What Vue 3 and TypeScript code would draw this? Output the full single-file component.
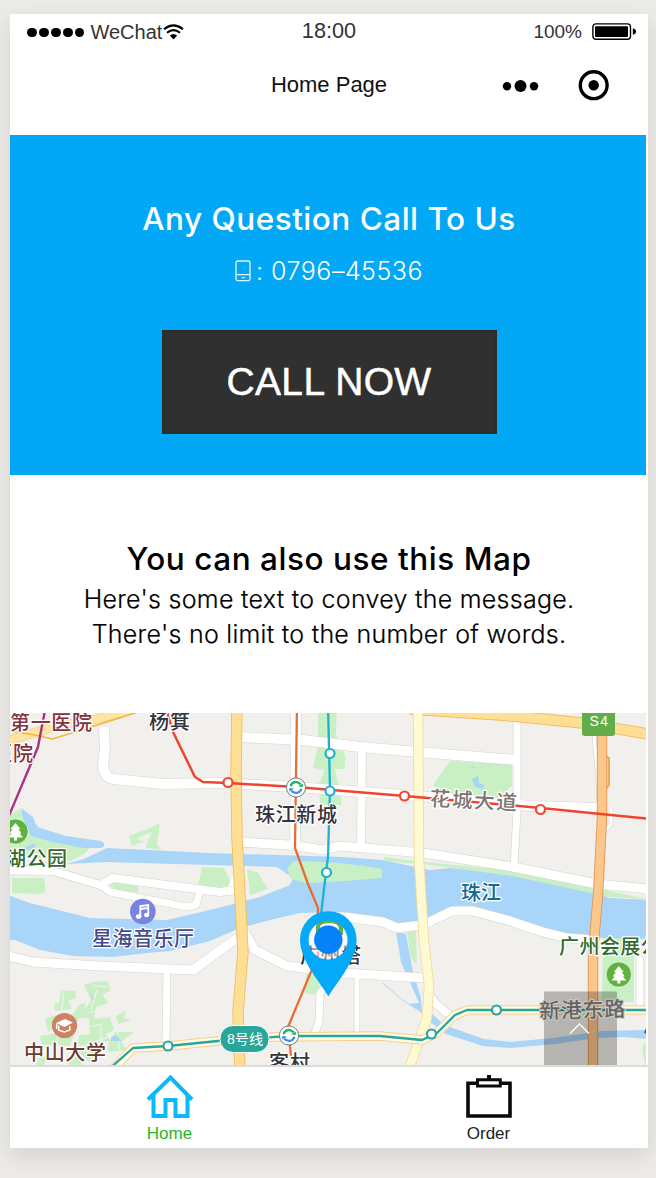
<script setup lang="ts">
interface Line {
  d: string
  w: number
}
interface Highway extends Line {
  fill: string
  edge: string
}
interface Stop {
  x: number
  y: number
  color: string
}
interface Label {
  text: string
  x: number
  y: number
  w: number
  size: number
  color: string
  rotate?: number
}

const signal = [1, 2, 3, 4, 5]

const streets: Line[] = [
  { d: 'M104 727 L105 748 L103 765 Q104 777 113 779 L163 784 L220 783 L296 787 L430 797 L530 806 L597 808', w: 10 },
  { d: 'M0 870 L53 871 L100 885 L113 878 L220 892 L244 889', w: 8 },
  { d: 'M100 884 L110 892 L187 907 L196 905 L200 891', w: 7 },
  { d: 'M0 954 L33 962 L100 966 L193 970 L237 938', w: 9 },
  { d: 'M245 933 L255 950 L287 966 L343 973 L424 978', w: 9 },
  { d: 'M167 968 L166 1043', w: 7 },
  { d: 'M296 705 L295 850', w: 10 },
  { d: 'M238 737 L303 740 L360 747 L430 753 L516 760', w: 10 },
  { d: 'M362 748 L361 848', w: 8 },
  { d: 'M238 842 L290 845 L323 850 L340 846 L423 853 L513 867 L597 884 L660 890', w: 9 },
  { d: 'M517 718 L517 810 L514 867', w: 7 },
  { d: 'M594 735 L599 792 L597 808', w: 3 },
  { d: 'M595 828 L600 838 L611 824 L611 807', w: 3 },
  { d: 'M345 917 L383 922 L397 928 L423 925 L452 911 L473 911 L510 921 L543 932 L567 938 L595 940', w: 9 },
  { d: 'M330 982 L320 993 L319 1022 L314 1036', w: 7 },
  { d: 'M357 972 L357 1040', w: 5 },
  { d: 'M426 990 L436 1004 L451 1016', w: 8 },
  { d: 'M640 958 L640 1008', w: 7 },
]

const highways: Highway[] = [
  { d: 'M0 743 L53 727 L97 719 L142 707', w: 8, fill: '#ffe5a3', edge: '#f5cd85' },
  { d: 'M410 709 L500 715 L553 720 L583 723 L660 736', w: 10, fill: '#ffdf94', edge: '#efbd63' },
  { d: 'M418 705 L419 860 L424 942 L429 985 L427 1018 L408 1072', w: 9, fill: '#fffad2', edge: '#f2dc9e' },
  { d: 'M110 1072 L133 1048 L168 1046 L218 1041 L273 1037 L380 1036 L422 1040 L437 1033 L455 1015 L468 1010 L660 1010', w: 8, fill: '#fffbe0', edge: '#f4cf91' },
  { d: 'M237 705 L236 772 L237 838 L240 895 L243 952 L238 1012 L240 1072', w: 10, fill: '#ffdf94', edge: '#efbd63' },
  { d: 'M602 730 L602 818 L598 895 L593 952 L593 1072', w: 9, fill: '#fdc78b', edge: '#e39650' },
]

const metro: { d: string; color: string; w: number }[] = [
  { d: 'M46 705 L38 747 L8 818', color: '#a8327f', w: 2.4 },
  { d: 'M165 705 L173 732 L195 777 L203 782 L228 783 L296 787 L405 796 L541 808 L660 820', color: '#f0452c', w: 2.5 },
  { d: 'M297 705 L295 848 L308 884 L318 908 L318 955 L288 1027 L291 1056', color: '#e96c35', w: 2.3 },
  { d: 'M328 705 L330 790 L328 857 L326 872 L321 915', color: '#1fb1d2', w: 2.3 },
  { d: 'M108 1070 L133 1048 L168 1046 L218 1041 L289 1036 L380 1036 L422 1040 L437 1033 L455 1015 L467 1010 L660 1010', color: '#28a69b', w: 2.3 },
]

const red = '#ef4931'
const cyan = '#1fb1d2'
const teal = '#28a69b'
const stops: Stop[] = [
  { x: 228, y: 782.5, color: red },
  { x: 404.5, y: 796, color: red },
  { x: 540.5, y: 809.5, color: red },
  { x: 330, y: 753.5, color: cyan },
  { x: 330, y: 791, color: cyan },
  { x: 326.5, y: 872.5, color: cyan },
  { x: 168, y: 1046, color: teal },
  { x: 431.5, y: 1034, color: teal },
  { x: 496.5, y: 1010, color: teal },
]

const interchanges = [
  { x: 296, y: 787.5 },
  { x: 289, y: 1035.5 },
]

const labels: Label[] = [
  { text: '第一医院', x: 10, y: 730, w: 82, size: 20, color: '#81323f' },
  { text: '医院', x: -8, y: 760.5, w: 41, size: 20, color: '#81323f' },
  { text: '杨箕', x: 149, y: 729, w: 41, size: 20, color: '#34343a' },
  { text: '珠江新城', x: 255, y: 822, w: 82, size: 20, color: '#34343a' },
  { text: '花城大道', x: 429.5, y: 805.5, w: 87, size: 20.5, color: '#7d7672', rotate: 3 },
  { text: '湖公园', x: 6, y: 866, w: 61, size: 20, color: '#35692d' },
  { text: '珠江', x: 461, y: 900, w: 40, size: 20, color: '#136794' },
  { text: '星海音乐厅', x: 92, y: 946, w: 102, size: 20, color: '#434b8d' },
  { text: '中山大学', x: 24, y: 1060, w: 82, size: 20, color: '#6e3c2f' },
  { text: '广州塔', x: 300, y: 963, w: 61, size: 20, color: '#34343a' },
  { text: '客村', x: 269, y: 1070, w: 41, size: 20, color: '#34343a' },
  { text: '广州会展公园', x: 559, y: 954, w: 122, size: 20, color: '#35692d' },
]
</script>

<template>
  <div class="page">
    <div class="phone">
      <header class="status">
        <div class="carrier">
          <span class="signal"><i v-for="n in signal" :key="n" /></span>
          <span>WeChat</span>
          <svg class="wifi" width="21" height="16" viewBox="0 0 21 16">
            <g fill="none" stroke="#000" stroke-width="2.1">
              <path d="M1 5.2 Q10.500 -2.400 20 5.200" />
              <path d="M4 8.800 Q10.500 3.600 17 8.800" />
            </g>
            <path d="M6.800 11.600 Q10.500 8.400 14.200 11.600 L10.500 15.600 Z" />
          </svg>
        </div>
        <span class="clock">18:00</span>
        <div class="power">
          <span>100%</span>
          <svg width="45" height="18" viewBox="0 0 45 18">
            <rect x=".9" y=".9" width="37.600" height="15.400" rx="3" fill="none" stroke="#000" stroke-width="1.400" />
            <rect x="3" y="3.200" width="33" height="10.800" rx="1" />
            <path d="M40.800 5.600 Q44 6 44 8.600 Q44 11.200 40.800 11.800 Z" />
          </svg>
        </div>
      </header>

      <nav class="titlebar">
        <span class="title">Home Page</span>
        <svg class="actions" width="110" height="34" viewBox="0 0 110 34">
          <circle cx="7" cy="18.300" r="4.200" />
          <circle cx="20.500" cy="18" r="6" />
          <circle cx="34" cy="18.300" r="4.200" />
          <circle cx="93.700" cy="17.200" r="13.400" fill="none" stroke="#000" stroke-width="3.400" />
          <circle cx="93.700" cy="17.200" r="5.200" />
        </svg>
      </nav>

      <section class="contact">
        <h2>Any Question Call To Us</h2>
        <p class="number">
          <svg width="17" height="22" viewBox="0 0 17 22" fill="none" stroke="#e4f6ff" stroke-width="1.300">
            <rect x="1" y="1" width="14" height="19.600" rx="1.500" />
            <path d="M1 14.700 H15 M6.500 17.700 H10" />
          </svg>
          <span>: 0796–45536</span>
        </p>
        <button type="button">CALL NOW</button>
      </section>

      <section class="intro">
        <h2>You can also use this Map</h2>
        <p class="first">Here's some text to convey the message.</p>
        <p class="second">There's no limit to the number of words.</p>
      </section>

      <svg class="map" width="636" height="352" viewBox="10 713 636 352">
        <rect x="10" y="713" width="636" height="352" fill="#f2f0ed" />

        <!-- parks -->
        <g fill="#c9f0c5">
          <path d="M318 705 L337 705 L336 735 L345 756 L345 769 L335 769 L338 784 L341 788 L341 805 L320 805 L319 783 L325 770 L313 768 L318 745 Z" />
          <path d="M450 761 L512 764 L512 786 L499 797 L440 793 L433 785 Z" />
          <path d="M10 814 L22 808 L32 820 L44 832 L92 846 L84 854 L70 861 L10 855 Z" />
          <path d="M12 878 L44 878 L46 892 L40 894 L12 893 Z" />
          <path d="M105 881 L138 886 L138 892 L118 892 Z" />
          <path d="M202 867 L224 868 L232 885 L232 892 L198 887 Z" />
          <path d="M247 869 L258 873 L268 889 L250 895 Z" />
          <path d="M129 836 L150 828 L160 823 L157 845 L162 850 L146 848 L148 840 L132 846 Z" />
          <path d="M306 974 L316 974 L320 988 L318 995 L304 993 Z" />
          <path d="M407 932 L416 930 L417 965 L411 958 Z" />
          <path d="M603 938 L634 938 L634 1002 L602 1002 Z" />
          <path d="M642 1046 L650 1038 L650 1065 L645 1065 Z" />
        </g>
        <path d="M136 839 L152 832 L147 842 Z" fill="#f2f0ed" />

        <!-- campus greenery -->
        <g fill="#c9f0c5">
          <path d="M84 985 L93 982 L108 981 L110 991 L102 995 L109 1003 L96 1007 L94 1019 L110 1017 L114 1030 L106 1034 L111 1041 L95 1043 L97 1055 L89 1062 L77 1050 L79 1035 L90 1034 L89 1018 L78 1018 L91 1001 Z" />
          <path d="M61 990 L75 991 L76 998 L68 1001 L72 1009 L55 1011 L54 1004 L59 1003 Z" />
          <path d="M45 1018 L57 1015 L55 1026 L48 1032 Z M80 1004 L86 1003 L82 1016 L72 1026 L70 1018 Z" />
          <path d="M116 1016 L126 1010 L124 1018 L131 1020 L118 1024 Z M115 1032 L134 1032 L121 1042 L128 1050 L108 1052 L108 1045 Z" />
          <path d="M40 1036 L76 1030 L70 1046 L42 1045 Z M38 1058 L48 1056 L44 1065 L36 1065 Z M68 1057 L78 1056 L82 1065 L69 1065 Z" />
        </g>
        <g fill="none" stroke="#f2f0ed" stroke-width="1.200">
          <path d="M84 1028 L102 1024 M97 990 L91 1010 M101 1023 L101 1050 M80 1047 L111 1036 M64 988 L62 1011 M57 1036 L58 1046 M88 1013 L110 1008 M93 986 L108 987 M117 1030 L120 1052" />
        </g>

        <!-- water -->
        <g fill="#a9d5f8">
          <path d="M22 809 L33 817 L37 827 L66 836 L101 841 Q108 845 101 848 L84 848 L52 842 L31 836 L22 815 Z" />
          <path d="M107 848 L210 853 L343 857 L383 860 L430 870 L450 868 L512 874 L597 893 L610 898 L650 900 L650 939 L566 937 L543 932 L473 908 L450 907 L430 923 L397 926 L343 912 L300 913 L270 920 L240 928 L210 941 L170 951 L147 953 L113 957 L73 956 L40 950 L15 940 L0 941 L0 892 L30 903 L90 918 L167 920 L210 910 L260 897 L290 885 L293 878 L277 867 L210 865 L107 862 L66 864 L84 859 Z" />
          <path d="M396 932 L406 934 L413 972 L421 998 L422 1013 L408 1004 L419 1003 L401 962 Z" />
          <path d="M426 1008 L444 1025 L484 1039 L510 1042 L553 1038 L602 1031 L650 1030 L650 1039 L624 1037 L597 1038 L555 1044 L510 1048 L483 1046 L446 1034 L424 1017 Z" />
          <path d="M472 779 L478 776 L479 783 L484 785 L483 789 L475 787 Z M470 766 L475 767 L474 769 Z" />
          <path d="M89 991 L94 998 L93 1000 Z M111 1037 L117 1035 L121 1041 L111 1041 Z M16 851 L36 843 L34 849 Z" />
        </g>
        <path d="M383 983 L400 998 L410 1005" fill="none" stroke="#c3dff6" stroke-width="1.200" />

        <!-- river islets and banks -->
        <g fill="#c9f0c5">
          <path d="M293 861 Q340 861 382 869 L382 878 L345 881 L306 883 L291 879 L287 869 Z" />
          <path d="M384 857 L415 861 L514 871 L597 888 L646 899 L610 897 L512 876 L430 865 L384 861 Z" />
        </g>
        <path d="M225 893 L233 876 L248 894 Z" fill="#fff" />

        <!-- streets: outline first, then surface -->
        <g fill="none" stroke-linejoin="round">
          <path v-for="(s, i) in streets" :key="'e' + i" :d="s.d" :stroke-width="s.w + 1.200" stroke="#d6d5d2" />
          <path v-for="(s, i) in streets" :key="'s' + i" :d="s.d" :stroke-width="s.w" stroke="#fff" />
        </g>

        <!-- highways -->
        <g fill="none" stroke-linejoin="round">
          <path d="M605 755 L609 758 L609 785 L604 792" stroke="#e9ac57" stroke-width="2" fill="#ffd48b" />
          <g v-for="(h, i) in highways" :key="i">
            <path :d="h.d" :stroke-width="h.w + 1.400" :stroke="h.edge" />
            <path :d="h.d" :stroke-width="h.w - 0.400" :stroke="h.fill" />
          </g>
          <path d="M10 731 L35 735 L52 739 L72 733 L138 712" stroke="#f0b83d" stroke-width="1.600" />
        </g>

        <!-- metro -->
        <g fill="none" stroke-linejoin="round">
          <path v-for="(m, i) in metro" :key="i" :d="m.d" :stroke="m.color" :stroke-width="m.w" />
        </g>
        <circle v-for="(s, i) in stops" :key="i" :cx="s.x" :cy="s.y" r="4.500" fill="#fff" :stroke="s.color" stroke-width="2.200" />
        <g v-for="(c, i) in interchanges" :key="'c' + i" :transform="`translate(${c.x} ${c.y})`" fill="none">
          <circle r="9.600" fill="#fff" stroke="#777" stroke-width="1" />
          <path d="M-5.400 -1.200 A5.600 5.600 0 0 1 4.600 -3" stroke="#19b560" stroke-width="2.300" />
          <path d="M5.400 1.200 A5.600 5.600 0 0 1 -4.600 3" stroke="#3a91ea" stroke-width="2.300" />
          <path d="M2 -1 L6.800 -4 V-.4 Z" fill="#19b560" />
          <path d="M-2 1 L-6.800 4 V.4 Z" fill="#3a91ea" />
        </g>

        <!-- road shields -->
        <rect x="582" y="703" width="33" height="33" rx="3" fill="#62ad49" />
        <text class="shield" x="589.500" y="726" textLength="18.500">S4</text>
        <rect x="220" y="1025.500" width="49" height="27" rx="13" fill="#28a69b" stroke="#fff" />
        <text class="shield" x="227" y="1044" textLength="36" lengthAdjust="spacingAndGlyphs">8号线</text>

        <!-- places -->
        <g v-for="(p, i) in [{ x: 15.500, y: 831.500 }, { x: 618.800, y: 974.500 }]" :key="'p' + i" :transform="`translate(${p.x} ${p.y})`">
          <circle r="12.600" fill="#5fb23f" stroke="#fff" stroke-width=".6" />
          <path d="M0 -8.500 L5 -2.500 H3 L6 2 H4 L7.500 6 H1.500 V9 H-1.500 V6 H-7.500 L-4 2 H-6 L-3 -2.500 H-5 Z" fill="#fff" />
        </g>
        <g transform="translate(142.800 911.500)">
          <circle r="12.800" fill="#7a83e3" />
          <path d="M-2.500 5 V-5.500 L5.500 -6.500 V3 M-2.500 -2.500 L5.500 -3.500" fill="none" stroke="#fff" stroke-width="1.800" />
          <ellipse cx="-4.200" cy="5" rx="2.800" ry="2.300" fill="#fff" />
          <ellipse cx="3.800" cy="3.500" rx="2.600" ry="2.200" fill="#fff" />
        </g>
        <g transform="translate(64.500 1025.500)">
          <circle r="12.600" fill="#cf8261" />
          <path d="M-8.500 -2.500 L.5 -6.500 L8.500 -3 L0 1.500 Z" fill="#fff" />
          <path d="M-5.800 0 V4.800 L0 6.500 L5.300 4.500 V.5 M-7.800 -2 V3.500" fill="none" stroke="#fff" stroke-width="1.500" />
        </g>

        <text
          v-for="(l, i) in labels"
          :key="'l' + i"
          class="label"
          :x="l.x"
          :y="l.y"
          :textLength="l.w"
          :font-size="l.size"
          :fill="l.color"
          :transform="l.rotate ? `rotate(${l.rotate} ${l.x} ${l.y})` : undefined"
        >{{ l.text }}</text>
        <path d="M645 1033 L649 1024" stroke="#6e3c2f" stroke-width="2" />

        <!-- back to top -->
        <rect x="544" y="991.500" width="73" height="75" fill="#000" opacity=".25" />
        <text class="label road" x="539.500" y="1018.500" textLength="86" font-size="21" fill="#67635f" transform="rotate(-1.500 540 1018)">新港东路</text>
        <path d="M570 1033.500 L579.500 1024 L589 1033.500" fill="none" stroke="#fff" stroke-width="1.400" />

        <!-- current position -->
        <g>
          <circle cx="328" cy="940" r="19" fill="#fff" opacity=".5" />
          <path d="M318 937 V927 Q318 921 330 921 Q341 921 341 929 V935" fill="none" stroke="#62ad49" stroke-width="4" />
          <path d="M328.500 996.500 C322 985 300 961 300 939.500 A28.300 28.300 0 0 1 356.600 939.500 C356.600 961 336 983 328.500 996.500 Z M328 920.500 A19.500 19.500 0 1 0 328.100 920.500 Z" fill="#05a9fa" fill-rule="evenodd" />
          <circle cx="328.300" cy="939.800" r="14.200" fill="#0582fa" />
        </g>
      </svg>

      <footer class="tabs">
        <a class="tab active">
          <svg width="48" height="46" viewBox="0 0 48 46" fill="none" stroke="#0bb8fb" stroke-width="4">
            <path d="M2 25.500 L24.500 3.600 L46 25.500" />
            <path d="M7.500 21 V42 H19.500 V26 H29.500 V42 H41.500 V21" />
          </svg>
          <span>Home</span>
        </a>
        <a class="tab">
          <svg width="48" height="46" viewBox="0 0 48 46" fill="none" stroke="#0a0a0a" stroke-width="3.600">
            <path d="M12 9.200 H3 V42 H45 V9.200 H36" />
            <path d="M12.500 5.800 H35.300 V12 H12.500 Z" stroke-width="3" />
            <path d="M24 1 V5" stroke-width="4" />
          </svg>
          <span>Order</span>
        </a>
      </footer>
    </div>
  </div>
</template>

<style>
body {
  margin: 0;
  background: #ecebe7;
}
</style>

<style scoped>
.page {
  box-sizing: border-box;
  width: 656px;
  height: 1178px;
  padding: 14px 8px 30px 10px;
  background: #ecebe7;
  overflow: hidden;
  font-family: "Liberation Sans", "Noto Sans CJK SC", sans-serif;
}
.phone {
  display: flex;
  flex-direction: column;
  height: 1134px;
  background: #fff;
  box-shadow: 0 8px 22px rgba(0, 0, 0, 0.11);
}
.status {
  display: grid;
  grid-template-columns: 1fr auto 1fr;
  align-items: center;
  height: 36px;
  padding: 0 11px 0 17px;
  color: #333;
}
.carrier {
  display: flex;
  align-items: center;
  font-size: 20px;
  line-height: 22px;
  padding-bottom: 1px;
}
.signal {
  display: flex;
  gap: 2px;
  margin-right: 6px;
  padding-top: 2px;
}
.signal i {
  width: 9.900px;
  height: 9.900px;
  border-radius: 50%;
  background: #000;
}
.wifi {
  margin-top: 1px;
  margin-left: 1px;
}
.clock {
  margin-right: 6px;
  padding-bottom: 2px;
  font-size: 21.700px;
  line-height: 34px;
}
.power {
  display: flex;
  justify-content: flex-end;
  align-items: center;
  gap: 10px;
  font-size: 19px;
}
.titlebar {
  display: grid;
  grid-template-columns: 1fr auto 1fr;
  align-items: center;
  height: 42px;
  padding: 14px 0 29px;
  color: #111;
}
.title {
  grid-column: 2;
  font-size: 22px;
}
.actions {
  justify-self: end;
  margin-right: 38.500px;
}
.contact {
  box-sizing: border-box;
  display: flex;
  flex-direction: column;
  align-items: center;
  width: 636px;
  height: 339.500px;
  padding: 62px 0 0 2px;
  background: #02a8f5;
  color: #fff;
}
h2 {
  margin: 0;
  font-family: Inter, sans-serif;
  font-size: 31.500px;
  font-weight: 500;
  line-height: 44px;
  letter-spacing: 0.500px;
  white-space: nowrap;
}
p {
  margin: 0;
  font-family: Inter, sans-serif;
  font-size: 25px;
  white-space: nowrap;
}
.number {
  display: flex;
  align-items: center;
  gap: 4px;
  height: 36px;
  margin-top: 12px;
  font-weight: 300;
  letter-spacing: 0.500px;
}
.number svg {
  margin-top: -1px;
}
button {
  width: 335px;
  height: 104px;
  margin-top: 41px;
  padding: 0;
  border: 0;
  background: #303030;
  box-shadow: inset 0 0 0 3px #2d2d2d;
  color: #fff;
  font: 39px "Liberation Sans", sans-serif;
  letter-spacing: 0.350px;
  -webkit-text-stroke: 0.500px #fff;
}
.intro {
  box-sizing: border-box;
  display: flex;
  flex-direction: column;
  align-items: center;
  width: 636px;
  height: 238.500px;
  padding: 62px 0 0 2px;
  color: #000;
}
.intro h2 {
  margin-bottom: 1px;
  letter-spacing: 0.550px;
}
.intro p {
  line-height: 35.500px;
  font-weight: 300;
  letter-spacing: 0.270px;
  -webkit-text-stroke: 0.200px #000;
}
.map {
  display: block;
  flex: none;
}
.label {
  font-family: "Noto Sans CJK SC", sans-serif;
  font-weight: 500;
  stroke: #fff;
  stroke-width: 2.500px;
  stroke-linejoin: round;
  paint-order: stroke;
}
.road {
  stroke: #cfcdca;
  stroke-width: 2px;
}
.shield {
  fill: #fff;
  font: 14px "Liberation Sans", "Noto Sans CJK SC", sans-serif;
}
.tabs {
  display: grid;
  grid-template-columns: 1fr 1fr;
  flex: 1;
  border-top: 2px solid #dcdcda;
  background: #fff;
}
.tab {
  display: flex;
  flex-direction: column;
  align-items: center;
  padding-top: 7px;
  color: #222;
  font-size: 17px;
  line-height: 20px;
}
.tab span {
  margin-top: 4px;
}
.active {
  color: #28b628;
}
</style>
